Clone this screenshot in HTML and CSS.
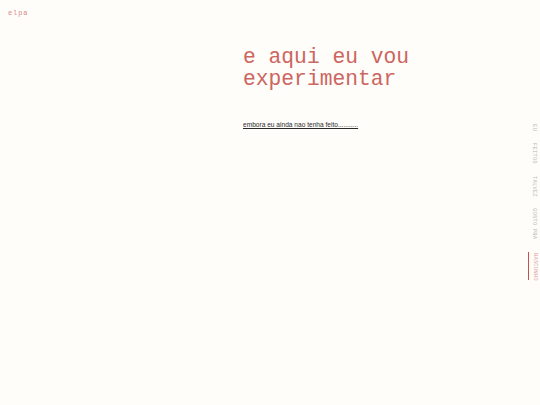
FILE: index.html
```html
<!DOCTYPE html>
<html lang="pt">
<head>
<meta charset="utf-8">
<link rel="stylesheet" href="styles.css">
</head>
<body>
<div class="page">
  <header class="logo">elpa</header>
  <main class="content">
    <h1 class="title">e aqui eu vou<br>experimentar</h1>
    <p class="lead"><a href="#">embora eu ainda nao tenha feito...........</a></p>
  </main>
  <nav class="side">
    <a href="#" class="item">EU</a>
    <a href="#" class="item">FEITOS</a>
    <a href="#" class="item">TALVEZ</a>
    <a href="#" class="item">GOSTO PRA</a>
    <a href="#" class="item active">RASCUNHO</a>
  </nav>
</div>
</body>
</html>
```
FILE: styles.css
```css
html, body {
  margin: 0;
  padding: 0;
  background: #fefdfa;
}
.page {
  width: 540px;
  height: 405px;
  display: grid;
  grid-template-columns: 243px 1fr 12px;
  grid-template-rows: auto 1fr;
  font-family: "Liberation Mono", monospace;
}
.logo {
  grid-column: 1;
  grid-row: 1;
  padding: 9px 0 0 8px;
  font-size: 7px;
  letter-spacing: 0.9px;
  color: #d98a8a;
}
.content {
  grid-column: 2;
  grid-row: 1 / span 2;
  padding-top: 46px;
}
.title {
  margin: 0;
  font-family: "Liberation Mono", monospace;
  font-weight: normal;
  font-size: 21.3px;
  line-height: 22px;
  color: #cd6560;
}
.lead {
  margin: 31px 0 0 0;
  font-family: "Liberation Sans", Arial, sans-serif;
  font-size: 6.6px;
}
.lead a {
  color: #2a2a2a;
  text-decoration: underline;
}
.side {
  grid-column: 3;
  grid-row: 1 / span 2;
  display: flex;
  flex-direction: column;
  align-items: flex-start;
  padding-top: 124px;
  gap: 12px;
}
.item {
  writing-mode: vertical-rl;
  font-size: 5.6px;
  letter-spacing: 0.1px;
  color: #b8b8b3;
  text-decoration: none;
  padding-left: 3px;
}
.item.active {
  color: #e3a3a0;
  border-left: 1px solid #c8504a;
  padding: 1px 0 0 3px;
}
```
